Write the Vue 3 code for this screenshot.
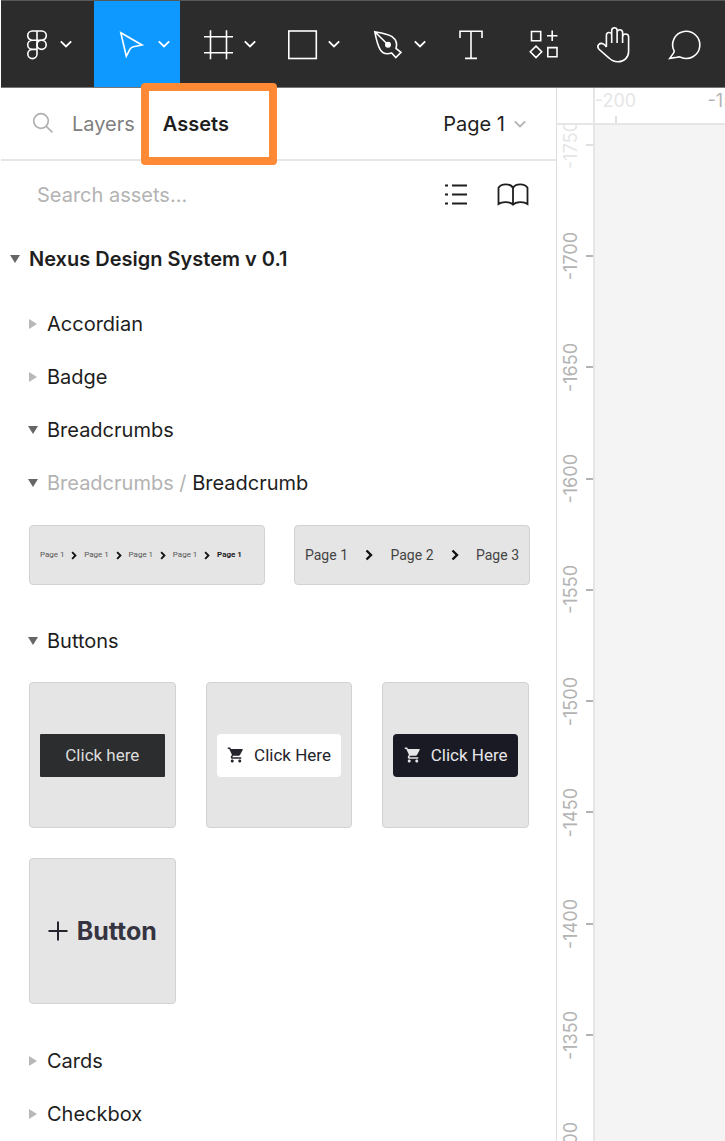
<script setup>
import { ref } from 'vue'

const tools = [
  { id: 'menu', label: 'Main menu', menu: true },
  { id: 'move', label: 'Move', menu: true },
  { id: 'frame', label: 'Frame', menu: true },
  { id: 'shape', label: 'Rectangle', menu: true },
  { id: 'pen', label: 'Pen', menu: true },
  { id: 'text', label: 'Text' },
  { id: 'widgets', label: 'Resources' },
  { id: 'hand', label: 'Hand' },
  { id: 'comment', label: 'Comment' },
]
const activeTool = ref('move')
const query = ref('')

const topMarks = ['-200', '-150']
const sideMarks = ['-1750', '-1700', '-1650', '-1600', '-1550', '-1500', '-1450', '-1400', '-1350', '-1300']
</script>

<template>
  <div class="app">
    <header class="toolbar">
      <button
        v-for="tool in tools"
        :key="tool.id"
        type="button"
        class="tool"
        :class="[tool.id, { active: tool.id === activeTool, single: !tool.menu }]"
        :aria-label="tool.label"
        @click="activeTool = tool.id"
      >
        <svg v-if="tool.id === 'menu'" class="icon narrow" viewBox="0 0 20 30">
          <path d="M10 2H5.3a4.6 4.6 0 0 0 0 9.2H10zM10 2h4.7a4.6 4.6 0 0 1 0 9.2H10zM10 11.2H5.3a4.6 4.6 0 0 0 0 9.2H10zM10 20.4H5.3a4.6 4.6 0 1 0 4.7 4.6z" />
          <circle cx="14.6" cy="15.8" r="4.6" />
        </svg>
        <svg v-else-if="tool.id === 'move'" class="icon" viewBox="0 0 30 30">
          <path d="M2.8 3.8 24 16 15.5 17.8Q13.2 18.2 12 20.2L8.3 27.2Z" />
        </svg>
        <svg v-else-if="tool.id === 'frame'" class="icon" viewBox="0 0 30 30">
          <path d="M6.5 1.3v29M22.5 1.3v29M0 7.7h29M0 23.7h29" />
        </svg>
        <svg v-else-if="tool.id === 'shape'" class="icon" viewBox="0 0 30 30">
          <rect x=".8" y="2" width="27.5" height="27.5" />
        </svg>
        <svg v-else-if="tool.id === 'pen'" class="icon" viewBox="0 0 30 30">
          <path d="M.8 2.8C8 4 14 4.9 18 7.6 22.6 11 23.6 14.5 22 19.5L27 23.4 21.8 28.6 17.6 24C13 25.4 8.6 24.6 6.2 20.6 3.5 16 2 9 .8 2.8ZL14 15.7" />
          <circle cx="14" cy="15.7" r="2.2" fill="#fff" />
        </svg>
        <svg v-else-if="tool.id === 'text'" class="icon" viewBox="0 0 30 30">
          <path d="M4 9V2.2H26V9M15 2.2V29.4M9 29.4H21" />
        </svg>
        <svg v-else-if="tool.id === 'widgets'" class="icon" viewBox="0 0 30 30">
          <path d="M2.5 2.5H11.700V11.7H2.5ZM18.800 18.600H28V27.800H18.800ZM7 17.100 12.700 22.800 7 28.500 1.300 22.800ZM23.200 1.500V12M18 6.800H28.500" />
        </svg>
        <svg v-else-if="tool.id === 'hand'" class="icon" viewBox="0 0 30 30">
          <path d="M7.400 18V6a2.700 2.700 0 0 1 5.300-.5V14M12.700 6V1.500a2.700 2.700 0 0 1 5.400 0V14M18.100 3a2.800 2.800 0 0 1 5.500 0V14M23.600 8a3 3 0 0 1 6 0V22.500c0 6-4.500 10.300-10.500 10.300-4 0-6.700-1.300-9.300-4L0 20.300c-3-3.500.8-7.500 4.600-5.200q1.500.9 2.800 2.900" />
        </svg>
        <svg v-else class="icon" viewBox="0 0 30 30">
          <path d="M3.200 22.200A13.600 13.600 0 1 1 9.700 28.300Q8 27.600 6 28.200L-1.200 29.300 2.300 24.400Q3.300 23 3.200 22.200Z" />
        </svg>
        <svg v-if="tool.menu" class="chevron" viewBox="0 0 12 8">
          <path d="M.8 1.300 6 6.500 11.200 1.300" />
        </svg>
      </button>
    </header>

    <main class="workspace">
      <aside class="sidebar">
        <div class="tabs">
          <button type="button" class="find" aria-label="Find layers">
            <svg width="22" height="22" viewBox="0 0 22 22">
              <circle cx="9" cy="8" r="7.300" />
              <path d="M14.300 13.300 20.500 19.500" />
            </svg>
          </button>
          <button type="button" class="tab">Layers</button>
          <button type="button" class="tab current">Assets</button>
          <button type="button" class="page-toggle">
            Page 1
            <svg class="chevron" viewBox="0 0 12 8"><path d="M.8 1.300 6 6.500 11.200 1.300" /></svg>
          </button>
        </div>

        <div class="search">
          <input v-model="query" type="text" aria-label="Search assets" placeholder="Search assets..." />
          <button type="button" aria-label="Show as list">
            <svg width="24" height="24" viewBox="0 0 24 24">
              <path d="M0 2.500h3M7 2.500h15M0 11.500h3M7 11.500h15M0 20.500h3M7 20.500h15" />
            </svg>
          </button>
          <button type="button" aria-label="Team library">
            <svg width="32" height="24" viewBox="0 0 32 24">
              <path d="M16 5C13.500 0 4 .3 1.500 4.800V21C5 18.300 13 18.300 16 21.700 19 18.300 27 18.300 30.500 21V4.800C28 .3 18.500 0 16 5ZV21.500" />
            </svg>
          </button>
        </div>

        <button type="button" class="library" aria-expanded="true">
          <span class="arrow open"></span>Nexus Design System v 0.1
        </button>

        <div class="tree">
          <button type="button" class="row" aria-expanded="false"><span class="arrow"></span>Accordian</button>
          <button type="button" class="row" aria-expanded="false"><span class="arrow"></span>Badge</button>
          <button type="button" class="row" aria-expanded="true"><span class="arrow open"></span>Breadcrumbs</button>
          <button type="button" class="row" aria-expanded="true">
            <span class="arrow open"></span><span><span class="muted">Breadcrumbs / </span>Breadcrumb</span>
          </button>
          <div class="previews pair">
            <div class="card crumbs small">
              <template v-for="n in 4" :key="n">
                <span>Page 1</span>
                <svg viewBox="0 0 8 12"><path d="M1.500 1.500 6 6 1.500 10.500" /></svg>
              </template>
              <b>Page 1</b>
            </div>
            <div class="card crumbs">
              <span>Page 1</span>
              <svg viewBox="0 0 8 12"><path d="M1.500 1.500 6 6 1.500 10.500" /></svg>
              <span>Page 2</span>
              <svg viewBox="0 0 8 12"><path d="M1.500 1.500 6 6 1.500 10.500" /></svg>
              <span>Page 3</span>
            </div>
          </div>

          <button type="button" class="row" aria-expanded="true"><span class="arrow open"></span>Buttons</button>
          <div class="previews">
            <div class="card square">
              <button type="button" class="sample plain">Click here</button>
            </div>
            <div v-for="tone in ['light', 'dark']" :key="tone" class="card square">
              <button type="button" class="sample" :class="tone">
                <svg width="18" height="18" viewBox="0 0 24 24">
                  <path d="M7 18c-1.100 0-1.990.9-1.990 2S5.900 22 7 22s2-.9 2-2-.9-2-2-2zM1 2v2h2l3.600 7.590-1.350 2.450c-.16.28-.25.61-.25.96 0 1.100.9 2 2 2h12v-2H7.420c-.14 0-.25-.11-.25-.25l.03-.12.9-1.630h7.450c.75 0 1.410-.41 1.750-1.030l3.580-6.490A1 1 0 0 0 20.010 4H5.210l-.94-2H1zm16 16c-1.100 0-1.990.9-1.990 2s.89 2 1.990 2 2-.9 2-2-.9-2-2-2z" />
                </svg>
                Click Here
              </button>
            </div>
            <div class="card square">
              <button type="button" class="sample text">
                <svg width="20" height="20" viewBox="0 0 20 20"><path d="M10 .5V19.500M.5 10H19.500" /></svg>
                Button
              </button>
            </div>
          </div>

          <button type="button" class="row" aria-expanded="false"><span class="arrow"></span>Cards</button>
          <button type="button" class="row" aria-expanded="false"><span class="arrow"></span>Checkbox</button>
        </div>
      </aside>

      <section class="canvas" aria-label="Canvas">
        <div class="corner"></div>
        <div class="ruler top">
          <div class="track">
            <span v-for="(m, i) in topMarks" :key="m" class="mark" :class="{ faint: i === 0 }">{{ m }}</span>
          </div>
        </div>
        <div class="ruler side">
          <div class="track">
            <span v-for="(m, i) in sideMarks" :key="m" class="mark" :class="{ faint: i === 0 }"><span class="turned">{{ m }}</span></span>
          </div>
        </div>
        <div class="board"></div>
      </section>
    </main>
  </div>
</template>

<style>
body {
  margin: 0;
  background: #fff;
}
</style>

<style scoped>
.app {
  display: flex;
  flex-direction: column;
  min-height: 100vh;
  padding-left: 1px;
  box-sizing: border-box;
  font-family: Inter, "Liberation Sans", sans-serif;
  font-size: 20px;
  line-height: 24px;
  color: #1e1e1e;
}
button {
  display: flex;
  align-items: center;
  margin: 0;
  padding: 0;
  border: 0;
  background: none;
  font: inherit;
  color: inherit;
  text-align: left;
}
svg {
  display: block;
  flex: none;
  fill: none;
  stroke: currentColor;
  overflow: visible;
}

.toolbar {
  display: grid;
  grid-template-columns: 93fr 86fr 84fr 86fr 86fr 70fr 76fr 64fr 79fr;
  height: 86px;
  border-top: 1px solid #55595a;
  border-bottom: 1px solid #767676;
  background: #2c2c2c;
  color: #fff;
}
.tool {
  gap: 10px;
  padding-left: 24px;
}
.tool.menu {
  gap: 13px;
  padding-left: 26px;
}
.tool.single {
  justify-content: center;
  padding: 0;
}
.tool.active {
  background: #0d99ff;
}
.icon {
  width: 30px;
  height: 30px;
  stroke-width: 1.6;
}
.icon.narrow {
  width: 20px;
}
.chevron {
  width: 12px;
  height: 8px;
  stroke-width: 1.8;
}

.workspace {
  flex: 1;
  display: grid;
  grid-template-columns: 555fr 169fr;
}
.tabs {
  display: flex;
  align-items: center;
  height: 71px;
  padding: 0 30px 0 31px;
  border-bottom: 2px solid #e6e6e6;
}
.find {
  margin-right: 18px;
  color: #b0b0b0;
}
.find svg {
  stroke-width: 1.7;
}
.tab {
  color: #808080;
}
.tab.current {
  position: relative;
  margin-left: 28px;
  font-weight: 600;
  color: #1e1e1e;
}
.tab.current::after {
  content: "";
  position: absolute;
  inset: -29px -48px -29px -22px;
  border: 8px solid #ff8a36;
  border-radius: 4px;
}
.page-toggle {
  gap: 9px;
  margin-left: auto;
}
.page-toggle .chevron {
  color: #b3b3b3;
}

.search {
  display: flex;
  align-items: center;
  gap: 28px;
  height: 68px;
  padding: 0 27px 0 36px;
}
.search input {
  flex: 1;
  min-width: 0;
  padding: 0;
  border: 0;
  outline: 0;
  background: none;
  font: inherit;
  color: inherit;
}
.search input::placeholder {
  color: #b3b3b3;
  opacity: 1;
}
.search svg {
  stroke-width: 1.8;
}

.library {
  width: 100%;
  height: 60px;
  padding-left: 8px;
  font-weight: 600;
  gap: 8px;
}
.tree {
  padding-top: 8px;
}
.row {
  width: 100%;
  height: 53px;
  padding-left: 26px;
  gap: 8px;
}
.arrow {
  display: flex;
  justify-content: center;
  flex: none;
  width: 12px;
}
.arrow::before {
  content: "";
  border-style: solid;
  border-width: 5px 0 5px 8px;
  border-color: transparent transparent transparent #b8b8b8;
}
.arrow.open::before {
  border-width: 8px 5px 0;
  border-color: #666 transparent transparent;
}
.muted {
  color: #b3b3b3;
}

.previews {
  display: grid;
  grid-template-columns: repeat(3, 1fr);
  gap: 30px;
  padding: 15px 27px 30px 28px;
}
.previews.pair {
  grid-template-columns: repeat(2, 1fr);
  gap: 29px;
  padding: 16px 26px 29px 28px;
}
.card {
  display: flex;
  align-items: center;
  box-sizing: border-box;
  height: 60px;
  padding: 0 10px;
  border: 1px solid #d2d2d2;
  border-radius: 4px;
  background: #e5e5e5;
  font-family: Roboto, sans-serif;
}
.card.square {
  height: 146px;
}
.crumbs {
  justify-content: space-between;
  font-size: 14px;
  color: #444;
}
.crumbs svg {
  width: 8px;
  height: 12px;
  stroke: #111;
  stroke-width: 2.4;
}
.crumbs.small {
  padding-right: 22px;
  font-size: 8px;
  color: #555;
}
.crumbs.small b {
  color: #222;
}
.crumbs.small svg {
  width: 6px;
  height: 9px;
}
.sample {
  flex: 1;
  justify-content: center;
  gap: 9px;
  height: 43px;
  border-radius: 4px;
  font-size: 17px;
}
.sample svg {
  fill: currentColor;
  stroke: none;
}
.sample.plain {
  border-radius: 1px;
  background: #2c2d2e;
  color: #ddd;
}
.sample.light {
  background: #fff;
  color: #24242c;
}
.sample.dark {
  background: #1a1a24;
  color: #e6e6e8;
}
.sample.text {
  font-family: Inter, sans-serif;
  font-size: 25px;
  font-weight: 700;
  color: #353440;
}
.sample.text svg {
  stroke: #24242c;
  stroke-width: 2;
}

.canvas {
  display: grid;
  grid-template-columns: 38px 1fr;
  grid-template-rows: 37px 1fr;
  border-left: 1px solid #dedede;
  font-size: 18px;
  color: #b3b3b3;
}
.corner {
  border-right: 2px solid #e6e6e6;
  border-bottom: 2px solid #e6e6e6;
}
.ruler {
  contain: size;
  overflow: hidden;
}
.track {
  display: flex;
}
.mark {
  position: relative;
  display: flex;
  align-items: center;
  justify-content: center;
}
.mark::after {
  content: "";
  position: absolute;
  background: #b3b3b3;
}
.faint {
  color: #e6e6e6;
}
.faint::after {
  background: #e0e0e0;
}
.top {
  border-bottom: 2px solid #e6e6e6;
}
.top .track {
  margin-left: -35px;
}
.top .mark {
  flex: 0 0 111px;
  height: 26px;
}
.top .mark::after {
  top: 28px;
  left: 55px;
  width: 2px;
  height: 7px;
}
.side {
  border-right: 2px solid #e6e6e6;
}
.side .track {
  flex-direction: column;
  height: 1113px;
  margin-top: -36px;
}
.side .mark {
  flex: 1;
  padding-right: 8px;
}
.side .mark::after {
  right: 0;
  width: 7px;
  height: 2px;
}
.turned {
  writing-mode: vertical-rl;
  transform: rotate(180deg);
}
.board {
  background: #f4f4f4;
}
</style>
